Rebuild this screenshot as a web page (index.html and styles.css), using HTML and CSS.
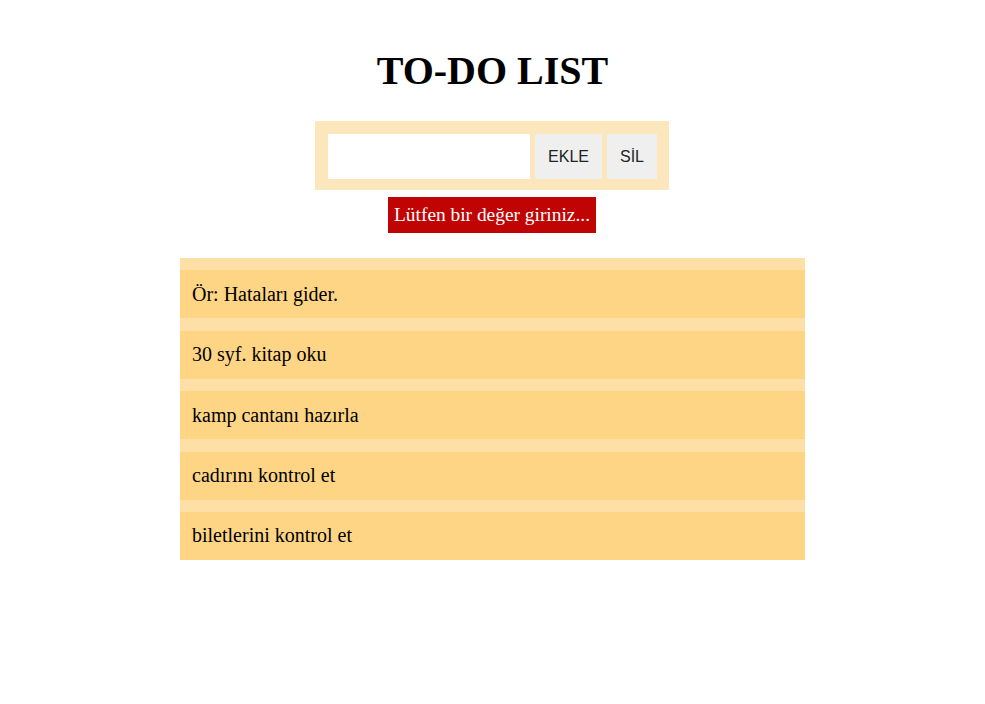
FILE: index.html
```html
<!DOCTYPE html>
<html lang="tr">
<head>
<meta charset="utf-8">
<title>TO-DO LIST</title>
<link rel="stylesheet" href="styles.css">
</head>
<body>
<main class="app">
  <h1 class="title">TO-DO LIST</h1>
  <form class="entry">
    <input class="entry-input" type="text">
    <button class="btn" type="button">EKLE</button>
    <button class="btn" type="button">SİL</button>
  </form>
  <div class="alert">Lütfen bir değer giriniz...</div>
  <ul class="list">
    <li class="item">Ör: Hataları gider.</li>
    <li class="item">30 syf. kitap oku</li>
    <li class="item">kamp cantanı hazırla</li>
    <li class="item">cadırını kontrol et</li>
    <li class="item">biletlerini kontrol et</li>
  </ul>
</main>
</body>
</html>
```

FILE: styles.css
```css
html, body {
  margin: 0;
  padding: 0;
  background: #ffffff;
}
body {
  font-family: "Liberation Serif", "Times New Roman", serif;
  color: #000;
}
.app {
  display: flex;
  flex-direction: column;
  align-items: center;
  padding-top: 48px;
}
.title {
  margin: 0;
  font-size: 40px;
  font-weight: bold;
  line-height: 46px;
}
.entry {
  margin-top: 27px;
  margin-right: 1px;
  display: flex;
  gap: 5px;
  padding: 13px 12px 11px 13px;
  background: #fce7bd;
  width: 329px;
}
.entry-input {
  width: 202px;
  height: 45px;
  box-sizing: border-box;
  border: none;
  background: #fff;
  margin: 0;
  padding: 0 6px;
  outline: none;
}
.btn {
  height: 45px;
  border: none;
  background: #efefef;
  font-family: "Liberation Sans", Arial, sans-serif;
  font-size: 16px;
  color: #222;
  padding: 0 12px;
  margin: 0;
}
.btn:first-of-type { width: 67px; }
.btn:last-of-type { width: 50px; }
.alert {
  margin-top: 7px;
  margin-right: 1px;
  background: #c00404;
  color: #fff;
  font-size: 19.4px;
  line-height: 36px;
  height: 36px;
  padding: 0 6px;
}
.list {
  list-style: none;
  margin: 25px 0 0;
  padding: 0;
  width: 625px;
  background: #fee0a6;
}
.item {
  margin-top: 12.4px;
  height: 48px;
  box-sizing: border-box;
  padding: 0 12px;
  display: flex;
  align-items: center;
  background: #fed584;
  font-size: 20px;
}
```
